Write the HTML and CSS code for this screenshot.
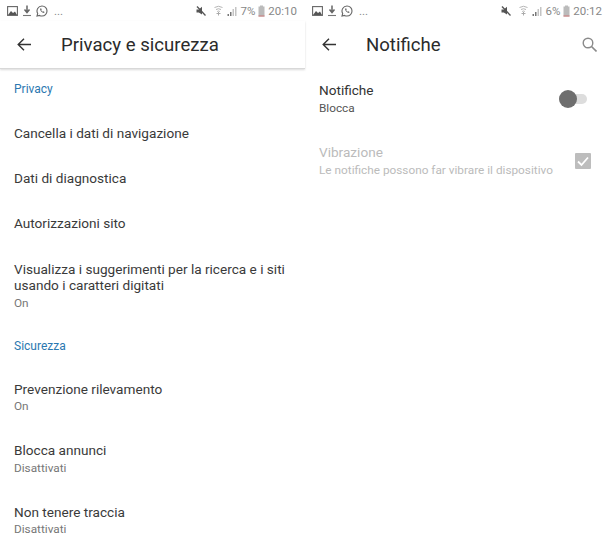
FILE: index.html
```html
<!DOCTYPE html>
<html lang="it">
<head>
  <meta charset="UTF-8" />
  <title>Privacy e Notifiche</title>
  <link rel="stylesheet" href="styles.css">
</head>
<body>
  <div class="screens">
    <div class="screen">
      <div class="statusbar">
        <div class="status-left">
          <svg class="st-icon" width="11" height="10" viewBox="0 0 11 10"><rect x="0.600" y="0.600" width="9.800" height="8.800" fill="none" stroke="#666" stroke-width="1.100"/><path d="M1 9L4 5L6 7L8 5.500L10 9Z" fill="#555"/></svg>
          <svg class="st-icon" width="10" height="12" viewBox="0 0 10 12"><path d="M5 0.500V6.500M2.500 4.500L5 7.500L7.500 4.500" fill="none" stroke="#666" stroke-width="1.500"/><path d="M1 10.500H9" stroke="#777" stroke-width="1.100"/></svg>
          <svg class="st-icon" width="12" height="12" viewBox="0 0 12 12"><path d="M6 1a5 5 0 0 1 0 10a5 5 0 0 1-2.400-.6L1 11l.7-2.500A5 5 0 0 1 6 1z" fill="none" stroke="#666" stroke-width="1.100"/><path d="M4 3.800c0 2.200 1.800 4 4 4.300l.6-1.200-1.300-.7-.6.500c-.7-.3-1.200-.9-1.500-1.500l.5-.6-.6-1.400z" fill="#666"/></svg>
          <span class="dots">...</span>
        </div>
        <div class="status-right">
          <svg class="st-icon mute" width="10" height="10" viewBox="0 0 10 10"><path d="M0.500 3.500H2.800L6 0.800V8.500L2.800 6.500H0.500Z" fill="#555"/><path d="M1 0.500L9.500 9.500" stroke="#555" stroke-width="1.300"/></svg>
          <svg class="st-icon wifi" width="9" height="11" viewBox="0 0 9 11"><path d="M0.500 2.500Q4.500 0 8.500 2.500M2 4.500Q4.500 3 7 4.500M3.200 6.500Q4.500 5.500 5.800 6.500" fill="none" stroke="#b5b5b5" stroke-width="1"/><path d="M4.500 7V10.500M2.500 8.500H6.500" stroke="#aaa"/></svg>
          <svg class="st-icon signal" width="10" height="10" viewBox="0 0 10 10"><path d="M0.500 8h1.500v2H0.500zM3 6H4.500v4H3z" fill="#777"/><path d="M5.500 3H7v7H5.500zM8 1h1.500v9H8z" fill="#c4c4c4"/></svg>
          <span class="pct">7%</span>
          <svg class="st-icon" width="7" height="12" viewBox="0 0 7 12"><path d="M2 0.500H5V1.500H6.500V11.500H0.500V1.500H2Z" fill="#bbb"/><path d="M0.500 10.500H6.500V11.500H0.500Z" fill="#c77"/></svg>
          <span class="clock">20:10</span>
        </div>
      </div>
      <div class="toolbar shadowed">
        <svg class="back" width="14" height="13" viewBox="0 0 14 13"><path d="M14 6.500H1.500M7 0.800L1.200 6.500L7 12.200" fill="none" stroke="#333" stroke-width="1.400"/></svg>
        <div class="toolbar-title">Privacy e sicurezza</div>
      </div>
      <div class="section-title first">Privacy</div>
      <div class="row single">Cancella i dati di navigazione</div>
      <div class="row single">Dati di diagnostica</div>
      <div class="row single">Autorizzazioni sito</div>
      <div class="row multi">
        <div class="row-title">Visualizza i suggerimenti per la ricerca e i siti usando i caratteri digitati</div>
        <div class="row-sub">On</div>
      </div>
      <div class="section-title">Sicurezza</div>
      <div class="row multi spaced">
        <div class="row-title">Prevenzione rilevamento</div>
        <div class="row-sub">On</div>
      </div>
      <div class="row multi spaced">
        <div class="row-title">Blocca annunci</div>
        <div class="row-sub">Disattivati</div>
      </div>
      <div class="row multi spaced">
        <div class="row-title">Non tenere traccia</div>
        <div class="row-sub">Disattivati</div>
      </div>
    </div>

    <div class="screen">
      <div class="statusbar">
        <div class="status-left">
          <svg class="st-icon" width="11" height="10" viewBox="0 0 11 10"><rect x="0.600" y="0.600" width="9.800" height="8.800" fill="none" stroke="#666" stroke-width="1.100"/><path d="M1 9L4 5L6 7L8 5.500L10 9Z" fill="#555"/></svg>
          <svg class="st-icon" width="10" height="12" viewBox="0 0 10 12"><path d="M5 0.500V6.500M2.500 4.500L5 7.500L7.500 4.500" fill="none" stroke="#666" stroke-width="1.500"/><path d="M1 10.500H9" stroke="#777" stroke-width="1.100"/></svg>
          <svg class="st-icon" width="12" height="12" viewBox="0 0 12 12"><path d="M6 1a5 5 0 0 1 0 10a5 5 0 0 1-2.400-.6L1 11l.7-2.500A5 5 0 0 1 6 1z" fill="none" stroke="#666" stroke-width="1.100"/><path d="M4 3.800c0 2.200 1.800 4 4 4.300l.6-1.200-1.300-.7-.6.500c-.7-.3-1.200-.9-1.500-1.500l.5-.6-.6-1.400z" fill="#666"/></svg>
          <span class="dots">...</span>
        </div>
        <div class="status-right">
          <svg class="st-icon mute" width="10" height="10" viewBox="0 0 10 10"><path d="M0.500 3.500H2.800L6 0.800V8.500L2.800 6.500H0.500Z" fill="#555"/><path d="M1 0.500L9.500 9.500" stroke="#555" stroke-width="1.300"/></svg>
          <svg class="st-icon wifi" width="9" height="11" viewBox="0 0 9 11"><path d="M0.500 2.500Q4.500 0 8.500 2.500M2 4.500Q4.500 3 7 4.500M3.200 6.500Q4.500 5.500 5.800 6.500" fill="none" stroke="#b5b5b5" stroke-width="1"/><path d="M4.500 7V10.500M2.500 8.500H6.500" stroke="#aaa"/></svg>
          <svg class="st-icon signal" width="10" height="10" viewBox="0 0 10 10"><path d="M0.500 8h1.500v2H0.500zM3 6H4.500v4H3z" fill="#777"/><path d="M5.500 3H7v7H5.500zM8 1h1.500v9H8z" fill="#c4c4c4"/></svg>
          <span class="pct">6%</span>
          <svg class="st-icon" width="7" height="12" viewBox="0 0 7 12"><path d="M2 0.500H5V1.500H6.500V11.500H0.500V1.500H2Z" fill="#bbb"/><path d="M0.500 10.500H6.500V11.500H0.500Z" fill="#c77"/></svg>
          <span class="clock">20:12</span>
        </div>
      </div>
      <div class="toolbar">
        <svg class="back" width="14" height="13" viewBox="0 0 14 13"><path d="M14 6.500H1.500M7 0.800L1.200 6.500L7 12.200" fill="none" stroke="#333" stroke-width="1.400"/></svg>
        <div class="toolbar-title">Notifiche</div>
        <svg class="search" width="15" height="15" viewBox="0 0 15 15"><circle cx="6" cy="6" r="4.800" fill="none" stroke="#8a8a8a" stroke-width="1.400"/><path d="M9.500 9.500L14.500 14.500" stroke="#8a8a8a" stroke-width="1.600"/></svg>
      </div>
      <div class="setting first-setting">
        <div class="setting-text">
          <div class="row-title">Notifiche</div>
          <div class="row-sub dark">Blocca</div>
        </div>
        <div class="switch"><div class="switch-knob"></div></div>
      </div>
      <div class="setting disabled">
        <div class="setting-text">
          <div class="row-title">Vibrazione</div>
          <div class="row-sub">Le notifiche possono far vibrare il dispositivo</div>
        </div>
        <svg class="checkbox" width="16" height="16" viewBox="0 0 16 16"><rect width="16" height="16" rx="1" fill="#bdbdbd"/><path d="M3 8.500L6.500 12L13 4.500" fill="none" stroke="#fff" stroke-width="1.800"/></svg>
      </div>
    </div>
  </div>
</body>
</html>
```

FILE: styles.css
```css
body {
  margin: 0;
  background: white;
  font-family: Roboto, sans-serif;
  color: #333;
}

.screens {
  display: flex;
  width: 610px;
  height: 542px;
  overflow: hidden;
}

.screen {
  width: 305px;
  flex: none;
}

.statusbar {
  height: 21px;
  padding: 0 8px 0 7px;
  display: flex;
  justify-content: space-between;
  align-items: center;
  font-size: 11.500px;
  color: #888;
}

.status-left,
.status-right {
  display: flex;
  align-items: center;
  gap: 4px;
}

.status-right {
  gap: 3px;
}

.dots {
  margin-left: 2px;
}

.wifi {
  margin-left: 5px;
}

.signal {
  margin-left: 1px;
}

.toolbar {
  height: 47px;
  display: flex;
  align-items: center;
  padding-left: 17px;
  padding-right: 13px;
}

.shadowed {
  border-bottom: 1px solid #d8d8d8;
  box-shadow: 0 1px 2px rgba(0, 0, 0, 0.15);
}

.back {
  flex: none;
}

.toolbar-title {
  font-size: 18.600px;
  color: #2b2b2b;
  margin-left: 30px;
  flex: 1;
}

.section-title {
  padding: 0 14px;
  font-size: 12px;
  color: #2b78b0;
  line-height: 14px;
  margin-top: 29px;
}

.section-title.first {
  margin-top: 13px;
}

.row {
  padding: 0 14px;
  font-size: 13.600px;
  line-height: 16px;
  color: #3a3a3a;
}

.row.single {
  margin-top: 29px;
}

.row.multi {
  margin-top: 30px;
}

.row.spaced {
  margin-top: 29px;
}

.section-title + .row.spaced {
  margin-top: 28px;
}

.row-sub {
  font-size: 11.800px;
  line-height: 14px;
  margin-top: 2.500px;
  color: #777;
}

.setting {
  display: flex;
  align-items: center;
  padding: 0 18px 0 14px;
  font-size: 13.600px;
  line-height: 16px;
}

.first-setting {
  margin-top: 14px;
}

.setting + .setting {
  margin-top: 29px;
}

.setting-text {
  flex: 1;
}

.setting .row-sub {
  margin-top: 3px;
}

.row-sub.dark {
  color: #555;
}

.disabled .row-title,
.disabled .row-sub {
  color: #bbb;
}

.checkbox {
  margin-right: 1px;
}

.switch {
  width: 28px;
  height: 10px;
  border-radius: 5px;
  background: #ddd;
  position: relative;
  margin-right: 5px;
}

.switch-knob {
  position: absolute;
  left: 0;
  top: -4px;
  width: 18px;
  height: 18px;
  border-radius: 50%;
  background: #6e6e6e;
}
```
